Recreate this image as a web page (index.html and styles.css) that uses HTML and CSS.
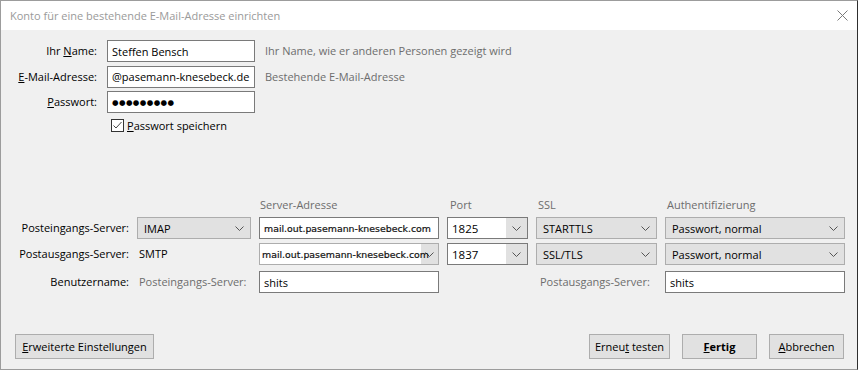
FILE: index.html
```html
<!DOCTYPE html>
<html lang="de">
<head>
<meta charset="utf-8">
<title>Konto für eine bestehende E-Mail-Adresse einrichten</title>
<link rel="stylesheet" href="styles.css">
</head>
<body>
<div class="window">
  <header class="titlebar">
    <span class="title">Konto für eine bestehende E-Mail-Adresse einrichten</span>
    <span class="close"><svg width="11" height="11" viewBox="0 0 11 11"><path d="M0.5 0.5 L10.5 10.5 M10.5 0.5 L0.5 10.5" stroke="#7a7a7a" stroke-width="1" fill="none"/></svg></span>
  </header>
  <main class="content">
    <section class="identity">
      <span class="lbl">Ihr <u>N</u>ame:</span>
      <div class="input"><span class="val">Steffen Bensch</span></div>
      <span class="hint">Ihr Name, wie er anderen Personen gezeigt wird</span>

      <span class="lbl"><u>E</u>-Mail-Adresse:</span>
      <div class="input"><span class="val">@pasemann-knesebeck.de</span></div>
      <span class="hint">Bestehende E-Mail-Adresse</span>

      <span class="lbl"><u>P</u>asswort:</span>
      <div class="input"><span class="val dots">●●●●●●●●●</span></div>
      <span></span>

      <span></span>
      <div class="remember">
        <span class="checkbox"><svg width="11" height="11" viewBox="0 0 11 11"><path d="M1.5 5.5 L4 8 L9.5 2" stroke="#444" stroke-width="1" fill="none"/></svg></span>
        <span><u>P</u>asswort speichern</span>
      </div>
    </section>

    <section class="servers">
      <span></span>
      <span></span>
      <span class="head h3">Server-Adresse</span>
      <span class="head h4">Port</span>
      <span class="head h5">SSL</span>
      <span class="head h6">Authentifizierung</span>

      <span class="lbl">Posteingangs-Server:</span>
      <div class="select"><span class="val">IMAP</span><span class="chev"><svg width="9" height="5" viewBox="0 0 9 5"><path d="M0.5 0.5 L4.5 4.5 L8.5 0.5" stroke="#555" fill="none"/></svg></span></div>
      <div class="input"><span class="val host">mail.out.pasemann-knesebeck.com</span></div>
      <div class="combo"><span class="val">1825</span><span class="dropbtn"><svg width="9" height="5" viewBox="0 0 9 5"><path d="M0.5 0.5 L4.5 4.5 L8.5 0.5" stroke="#555" fill="none"/></svg></span></div>
      <div class="select"><span class="val">STARTTLS</span><span class="chev"><svg width="9" height="5" viewBox="0 0 9 5"><path d="M0.5 0.5 L4.5 4.5 L8.5 0.5" stroke="#555" fill="none"/></svg></span></div>
      <div class="select"><span class="val">Passwort, normal</span><span class="chev"><svg width="9" height="5" viewBox="0 0 9 5"><path d="M0.5 0.5 L4.5 4.5 L8.5 0.5" stroke="#555" fill="none"/></svg></span></div>

      <span class="lbl">Postausgangs-Server:</span>
      <span class="plain">SMTP</span>
      <div class="combo light"><span class="val host">mail.out.pasemann-knesebeck.com</span><span class="dropbtn wide"><svg width="9" height="5" viewBox="0 0 9 5"><path d="M0.5 0.5 L4.5 4.5 L8.5 0.5" stroke="#555" fill="none"/></svg></span></div>
      <div class="combo"><span class="val">1837</span><span class="dropbtn"><svg width="9" height="5" viewBox="0 0 9 5"><path d="M0.5 0.5 L4.5 4.5 L8.5 0.5" stroke="#555" fill="none"/></svg></span></div>
      <div class="select"><span class="val">SSL/TLS</span><span class="chev"><svg width="9" height="5" viewBox="0 0 9 5"><path d="M0.5 0.5 L4.5 4.5 L8.5 0.5" stroke="#555" fill="none"/></svg></span></div>
      <div class="select"><span class="val">Passwort, normal</span><span class="chev"><svg width="9" height="5" viewBox="0 0 9 5"><path d="M0.5 0.5 L4.5 4.5 L8.5 0.5" stroke="#555" fill="none"/></svg></span></div>

      <span class="lbl r3">Benutzername:</span>
      <span class="plain muted r3">Posteingangs-Server:</span>
      <div class="input r3"><span class="val">shits</span></div>
      <span class="r3"></span>
      <span class="plain muted r3 outlbl">Postausgangs-Server:</span>
      <div class="input r3"><span class="val">shits</span></div>
    </section>

    <footer class="actions">
      <button class="btn btn-adv"><u>E</u>rweiterte Einstellungen</button>
      <span class="spacer"></span>
      <button class="btn btn-retest">Erneu<u>t</u> testen</button>
      <button class="btn btn-default"><u>F</u>ertig</button>
      <button class="btn btn-cancel"><u>A</u>bbrechen</button>
    </footer>
  </main>
</div>
</body>
</html>
```
FILE: styles.css
```css
* { box-sizing: border-box; }

body {
  margin: 0;
  background: #ffffff;
  font-family: "Open Sans", "Liberation Sans", sans-serif;
  font-size: 11px;
  color: #000;
}

.window {
  width: 858px;
  height: 370px;
  border: 1px solid #9c9c9c;
  border-right-color: #2e2e2e;
  background: #f0f0f0;
  display: flex;
  flex-direction: column;
}

.titlebar {
  height: 29px;
  flex: none;
  background: #ffffff;
  display: flex;
  align-items: center;
  justify-content: space-between;
  padding: 0 9px 0 9px;
}

.title {
  color: #9a9a9a;
  font-size: 11px;
}

.close { display: flex; }

.content {
  flex: 1;
  display: flex;
  flex-direction: column;
  padding: 10px 13px 10px 0;
}

u { text-decoration: underline; text-underline-offset: 1px; }

/* identity form */
.identity {
  display: grid;
  grid-template-columns: 96px 148px 1fr;
  grid-template-rows: 22px 22px 22px 16px;
  column-gap: 10px;
  row-gap: 3.5px;
}

.lbl {
  text-align: right;
  line-height: 22px;
  white-space: nowrap;
}

.hint {
  color: #6d6d6d;
  line-height: 22px;
  white-space: nowrap;
}

.input {
  background: #fff;
  border: 1px solid #7a7a7a;
  display: flex;
  align-items: center;
  padding-left: 4px;
  white-space: nowrap;
  overflow: hidden;
}

.dots {
  font-family: "DejaVu Sans", sans-serif;
  font-size: 7.5px;
  letter-spacing: 0.4px;
}

.remember {
  display: flex;
  align-items: center;
  gap: 3px;
  padding-left: 4px;
  padding-top: 1px;
}

.checkbox {
  width: 13px;
  height: 13px;
  border: 1px solid #333;
  background: #fff;
  display: flex;
}

/* servers */
.servers {
  margin-top: 64.5px;
  display: grid;
  grid-template-columns: 128px 114px 180px 81px 121px 180px;
  grid-template-rows: 16px 22px 22px 24px;
  column-gap: 8px;
  row-gap: 4px;
}

.head {
  color: #6d6d6d;
  line-height: 16px;
  white-space: nowrap;
}
.h3 { padding-left: 1px; }
.h4 { padding-left: 3px; }
.h5 { padding-left: 2px; }
.h6 { padding-left: 2px; }

.select {
  background: #e1e1e1;
  border: 1px solid #adadad;
  display: flex;
  align-items: center;
  justify-content: space-between;
  padding: 0 6px 0 6px;
  white-space: nowrap;
}

.chev { display: flex; }

.combo {
  background: #fff;
  border: 1px solid #7a7a7a;
  display: flex;
  align-items: center;
  white-space: nowrap;
  overflow: hidden;
}
.combo .val { flex: 1; padding-left: 4px; font-size: 11.5px; }
.combo.light { border-color: #adadad; }
.combo .host { padding-left: 2px; position: relative; z-index: 1; margin-right: -8px; font-size: 9.4px; }

.dropbtn {
  width: 21px;
  align-self: stretch;
  background: #e1e1e1;
  display: flex;
  align-items: center;
  justify-content: center;
}
.dropbtn.wide { width: 23px; }

.host {
  font-family: "DejaVu Sans", sans-serif;
  font-size: 9.4px;
  color: #111;
  letter-spacing: 0;
  -webkit-text-stroke: 0.2px #111;
}

.plain {
  line-height: 22px;
  padding-left: 2px;
  white-space: nowrap;
}
.muted { color: #6d6d6d; }
.outlbl { padding-left: 4px; }

.r3 { align-self: end; height: 22px; }

/* actions */
.actions {
  margin-top: auto;
  display: flex;
  align-items: center;
  gap: 12px;
  padding-left: 14px;
}
.spacer { flex: 1; }

.btn {
  height: 25px;
  background: #e1e1e1;
  border: 1px solid #adadad;
  font-family: inherit;
  font-size: 11px;
  color: #000;
  padding: 0;
  white-space: nowrap;
}
.btn-adv { width: 139px; }
.btn-retest { width: 81px; }
.btn-default { width: 75px; font-weight: 700; }
.btn-cancel { width: 75px; }
```
